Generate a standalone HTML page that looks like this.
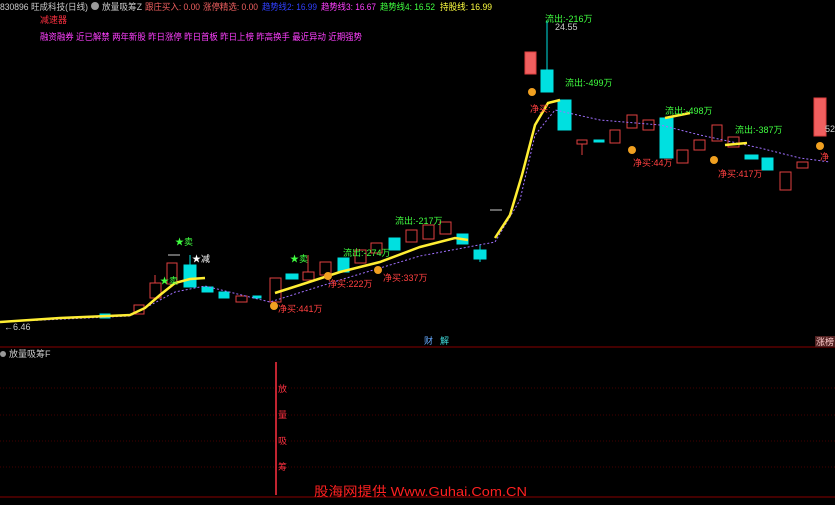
<!DOCTYPE html><html><head><meta charset="utf-8"><style>
body{margin:0;background:#000;width:835px;height:500px;overflow:hidden;font-family:"Liberation Sans","Noto Sans CJK SC",sans-serif;}
svg text{font-family:"Liberation Sans","Noto Sans CJK SC",sans-serif;}
</style></head><body>
<svg width="835" height="500" xmlns="http://www.w3.org/2000/svg">
<rect width="835" height="500" fill="#000"/>
<g font-size="9">
<text x="0" y="10" fill="#ccc" textLength="88" lengthAdjust="spacingAndGlyphs">830896 旺成科技(日线)</text>
<circle cx="95" cy="6" r="4" fill="#999"/>
<text x="102" y="10" fill="#ccc" textLength="40" lengthAdjust="spacingAndGlyphs">放量吸筹Z</text>
<text x="145" y="10" fill="#f06060" textLength="55" lengthAdjust="spacingAndGlyphs">跟庄买入: 0.00</text>
<text x="203" y="10" fill="#f06060" textLength="55" lengthAdjust="spacingAndGlyphs">涨停精选: 0.00</text>
<text x="262" y="10" fill="#3040ff" textLength="55" lengthAdjust="spacingAndGlyphs">趋势线2: 16.99</text>
<text x="321" y="10" fill="#ff40ff" textLength="55" lengthAdjust="spacingAndGlyphs">趋势线3: 16.67</text>
<text x="380" y="10" fill="#40ff40" textLength="55" lengthAdjust="spacingAndGlyphs">趋势线4: 16.52</text>
<text x="440" y="10" fill="#ffff40" textLength="52" lengthAdjust="spacingAndGlyphs">持股线: 16.99</text>
<text x="40" y="23" fill="#ff3040">减速器</text>
<text x="40" y="40" fill="#ff40ff" textLength="322" lengthAdjust="spacingAndGlyphs">融资融券 近已解禁 两年新股 昨日涨停 昨日首板 昨日上榜 昨高换手 最近异动 近期强势</text>
</g>
<g stroke="#400" stroke-dasharray="1,2">
<line x1="0" y1="347" x2="835" y2="347" stroke="#800" stroke-dasharray="0"/>
<line x1="0" y1="388" x2="835" y2="388"/><line x1="0" y1="415" x2="835" y2="415"/>
<line x1="0" y1="441" x2="835" y2="441"/><line x1="0" y1="467" x2="835" y2="467"/>
</g>
<line x1="0" y1="497" x2="835" y2="497" stroke="#800"/>
<g stroke-width="1">
<g fill="#00e0e0" stroke="#00e0e0">
<rect x="100" y="314" width="10" height="4"/><rect x="184" y="265" width="12" height="22"/><line x1="190" y1="255" x2="190" y2="265"/>
<rect x="202" y="287" width="11" height="5"/><rect x="219" y="292" width="10" height="6"/><rect x="253" y="296" width="8" height="2"/>
<rect x="286" y="274" width="12" height="5"/><rect x="338" y="258" width="11" height="14"/><rect x="389" y="238" width="11" height="12"/>
<rect x="457" y="234" width="11" height="10"/><rect x="474" y="250" width="12" height="9"/><line x1="480" y1="245" x2="480" y2="262"/>
<rect x="541" y="70" width="12" height="22"/><line x1="547" y1="20" x2="547" y2="70"/>
<rect x="558" y="100" width="13" height="30"/><rect x="594" y="140" width="10" height="2"/>
<rect x="660" y="118" width="13" height="40"/><rect x="745" y="155" width="13" height="4"/><rect x="762" y="158" width="11" height="12"/>
</g>
<g fill="none" stroke="#e04040">
<rect x="134" y="305" width="10" height="9"/><rect x="150" y="283" width="11" height="15"/><line x1="155" y1="275" x2="155" y2="283"/>
<rect x="167" y="263" width="10" height="21"/><rect x="236" y="296" width="11" height="6"/>
<rect x="270" y="278" width="11" height="24"/><rect x="303" y="272" width="11" height="8"/><line x1="308" y1="255" x2="308" y2="272"/>
<rect x="320" y="262" width="11" height="13"/><rect x="355" y="250" width="11" height="13"/><rect x="371" y="243" width="11" height="10"/>
<rect x="406" y="230" width="11" height="12"/><rect x="423" y="225" width="11" height="14"/><rect x="440" y="222" width="11" height="12"/>
<rect x="577" y="140" width="10" height="4"/><line x1="582" y1="144" x2="582" y2="155"/>
<rect x="610" y="130" width="10" height="13"/><rect x="627" y="115" width="10" height="13"/><rect x="643" y="120" width="11" height="10"/>
<rect x="677" y="150" width="11" height="13"/><rect x="694" y="140" width="11" height="10"/><rect x="712" y="125" width="10" height="16"/>
<rect x="728" y="137" width="11" height="10"/><rect x="780" y="172" width="11" height="18"/><rect x="797" y="162" width="11" height="6"/>
<rect x="814" y="98" width="12" height="38" fill="#f06060"/><rect x="525" y="52" width="11" height="22" fill="#f06060"/>
<line x1="490" y1="210" x2="502" y2="210" stroke="#ccc"/>
<line x1="168" y1="255" x2="180" y2="255" stroke="#ccc"/>
</g>
</g>
<polyline fill="none" stroke="#a070ff" stroke-width="1" stroke-dasharray="2,2" points="0,322 130,316 175,292 205,286 270,302 340,280 420,256 495,242 520,200 535,135 555,110 600,120 660,125 700,135 760,148 800,158 830,162"/>
<polyline fill="none" stroke="#ffee33" stroke-width="2.5" points="0,322 60,318 130,315 145,308 160,295 175,283 190,279 205,278"/>
<polyline fill="none" stroke="#ffee33" stroke-width="2.5" points="275,293 300,285 340,272 380,262 420,247 455,238 468,240"/>
<polyline fill="none" stroke="#ffee33" stroke-width="2.5" points="495,238 510,215 522,175 535,125 548,103 560,100"/>
<line x1="665" y1="118" x2="690" y2="113" stroke="#ffee33" stroke-width="2.5"/>
<line x1="725" y1="145" x2="747" y2="143" stroke="#ffee33" stroke-width="2.5"/>
<g font-size="9">
<text x="545" y="22" fill="#40ff40">流出:-216万</text><text x="555" y="30" fill="#ccc">24.55</text>
<text x="565" y="86" fill="#40ff40">流出:-499万</text><text x="530" y="112" fill="#ff4040">净买:</text>
<text x="665" y="114" fill="#40ff40">流出:-498万</text><text x="735" y="133" fill="#40ff40">流出:-387万</text>
<text x="633" y="166" fill="#ff4040">净买:44万</text><text x="718" y="177" fill="#ff4040">净买:417万</text>
<text x="395" y="224" fill="#40ff40">流出:-217万</text><text x="343" y="256" fill="#40ff40">流出:-274万</text>
<text x="383" y="281" fill="#ff4040">净买:337万</text><text x="328" y="287" fill="#ff4040">净买:222万</text>
<text x="278" y="312" fill="#ff4040">净买:441万</text>
<text x="175" y="245" fill="#40ff40">★卖</text><text x="192" y="262" fill="#fff">★减</text>
<text x="160" y="284" fill="#40ff40">★卖</text><text x="290" y="262" fill="#40ff40">★卖</text>
<text x="4" y="330" fill="#ccc">←6.46</text><text x="825" y="132" fill="#ccc">52</text>
<text x="820" y="160" fill="#ff4040">净</text>
</g>
<g fill="#f0a020"><circle cx="532" cy="92" r="4"/><circle cx="632" cy="150" r="4"/><circle cx="714" cy="160" r="4"/><circle cx="274" cy="306" r="4"/><circle cx="328" cy="276" r="4"/><circle cx="378" cy="270" r="4"/><circle cx="820" cy="146" r="4"/></g>
<text x="424" y="344" font-size="9" fill="#66aaff">财</text><text x="440" y="344" font-size="9" fill="#40dddd">解</text>
<rect x="815" y="336" width="20" height="11" fill="#502020"/><text x="816" y="345" font-size="9" fill="#ffcccc">涨榜</text>
<circle cx="3" cy="354" r="3" fill="#999"/>
<text x="9" y="357" font-size="9" fill="#ccc">放量吸筹F</text>
<line x1="276" y1="362" x2="276" y2="495" stroke="#ff3040" stroke-width="1.5"/>
<g font-size="9" fill="#ff3040"><text x="278" y="392">放</text><text x="278" y="418">量</text><text x="278" y="444">吸</text><text x="278" y="470">筹</text></g>
<text x="314" y="496" font-size="13" fill="#ff2020" textLength="213" lengthAdjust="spacingAndGlyphs">股海网提供 Www.Guhai.Com.CN</text>
</svg>
</body></html>
